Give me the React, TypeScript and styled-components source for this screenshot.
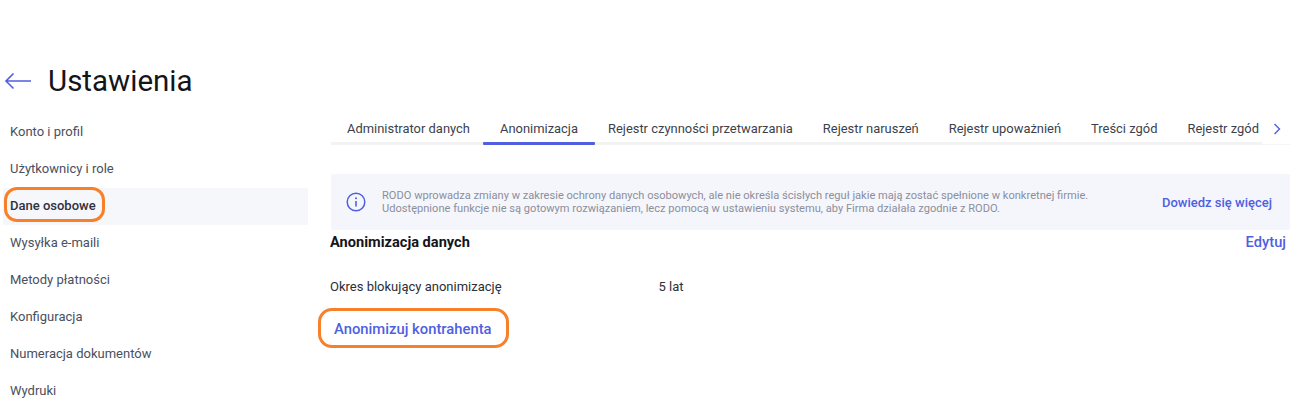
import styled, { createGlobalStyle } from "styled-components";

const menu = [
  "Konto i profil",
  "Użytkownicy i role",
  "Dane osobowe",
  "Wysyłka e-maili",
  "Metody płatności",
  "Konfiguracja",
  "Numeracja dokumentów",
  "Wydruki",
];

const tabs = [
  "Administrator danych",
  "Anonimizacja",
  "Rejestr czynności przetwarzania",
  "Rejestr naruszeń",
  "Rejestr upoważnień",
  "Treści zgód",
  "Rejestr zgód",
];

const GlobalStyle = createGlobalStyle`
  html, body {
    margin: 0;
    padding: 0;
    background: #fff;
    overflow: hidden;
  }
  body {
    font-family: Roboto, "Liberation Sans", sans-serif;
  }
`;

export default function App() {
  return (
    <S.Page>
      <GlobalStyle />
      <S.Header>
        <S.BackIcon width="28" height="18" viewBox="0 0 28 18" fill="none">
          <path d="M27 9H2M9.5 1.5L2 9l7.5 7.5" stroke="#4f5fe0" strokeWidth="1.6" />
        </S.BackIcon>
        <S.Title>Ustawienia</S.Title>
      </S.Header>

      <S.Body>
        <S.Sidebar>
          {menu.map((item) => (
            <S.MenuItem key={item} $active={item === "Dane osobowe"}>
              {item === "Dane osobowe" ? <S.MenuMark>{item}</S.MenuMark> : item}
            </S.MenuItem>
          ))}
        </S.Sidebar>

        <S.Content>
          <S.TabsBar>
            <S.Tabs>
              {tabs.map((tab) => (
                <S.Tab key={tab} $active={tab === "Anonimizacja"}>
                  {tab}
                </S.Tab>
              ))}
            </S.Tabs>
            <S.TabsNext>
              <svg width="8" height="12" viewBox="0 0 8 12" fill="none">
                <path d="M1.5 1l5 5-5 5" stroke="#4f5fe0" strokeWidth="1.4" />
              </svg>
            </S.TabsNext>
          </S.TabsBar>

          <S.Notice>
            <S.InfoIcon width="20" height="20" viewBox="0 0 20 20" fill="none">
              <circle cx="10" cy="10" r="8.8" stroke="#4f5fe0" strokeWidth="1.5" />
              <path d="M10 9v5.4" stroke="#4f5fe0" strokeWidth="1.6" />
              <circle cx="10" cy="6.2" r="1" fill="#4f5fe0" />
            </S.InfoIcon>
            <S.NoticeText>
              RODO wprowadza zmiany w zakresie ochrony danych osobowych, ale nie określa ścisłych reguł jakie mają
              zostać spełnione w konkretnej firmie.
              <br />
              Udostępnione funkcje nie są gotowym rozwiązaniem, lecz pomocą w ustawieniu systemu, aby Firma działała
              zgodnie z RODO.
            </S.NoticeText>
            <S.NoticeLink>Dowiedz się więcej</S.NoticeLink>
          </S.Notice>

          <S.SectionHead>
            <S.SectionTitle>Anonimizacja danych</S.SectionTitle>
            <S.EditLink>Edytuj</S.EditLink>
          </S.SectionHead>

          <S.Row>
            <S.RowLabel>Okres blokujący anonimizację</S.RowLabel>
            <S.RowValue>5 lat</S.RowValue>
          </S.Row>

          <S.ActionLink>Anonimizuj kontrahenta</S.ActionLink>
        </S.Content>
      </S.Body>
    </S.Page>
  );
}

const S = {
  Page: styled.div`
    width: 1309px;
    height: 409px;
    overflow: hidden;
    padding-top: 62px;
    box-sizing: border-box;
  `,

  Header: styled.header`
    display: flex;
    align-items: center;
    height: 37px;
    padding-left: 4px;
  `,

  BackIcon: styled.svg`
    display: block;
    margin-right: 16px;
  `,

  Title: styled.h1`
    margin: 0;
    font-size: 29.5px;
    font-weight: 400;
    color: #14151a;
  `,

  Body: styled.div`
    display: flex;
    margin-top: 15px;
  `,

  Sidebar: styled.nav`
    width: 305px;
    margin-left: 3px;
    margin-right: 22px;
    flex: none;
  `,

  MenuItem: styled.div<{ $active?: boolean }>`
    height: 37px;
    line-height: 36px;
    padding-left: 7px;
    font-size: 13px;
    color: ${(p) => (p.$active ? "#2f3040" : "#4a4f5e")};
    font-weight: ${(p) => (p.$active ? 500 : 400)};
    background: ${(p) => (p.$active ? "#f6f7fa" : "transparent")};
  `,

  MenuMark: styled.span`
    position: relative;
    display: inline-block;
    &::after {
      content: "";
      position: absolute;
      left: -6px;
      right: -9px;
      top: -1px;
      height: 35px;
      box-sizing: border-box;
      border: 3px solid #f7812b;
      border-radius: 13px;
    }
  `,

  Content: styled.main`
    width: 960px;
    flex: none;
  `,

  TabsBar: styled.div`
    position: relative;
    display: flex;
    height: 33px;
    width: 931px;
    margin-left: 1px;
    border-bottom: 3px solid #f3f3f4;
    box-sizing: content-box;
    margin-top: -5px;
  `,

  Tabs: styled.div`
    display: flex;
    flex: none;
    box-sizing: border-box;
    padding-left: 1px;
    width: 929px;
    height: 36px;
    overflow: hidden;
  `,

  Tab: styled.div<{ $active?: boolean }>`
    position: relative;
    flex: none;
    box-sizing: border-box;
    padding: 3px 15px 0;
    line-height: 34px;
    font-size: 12.93px;
    color: #3c3f4c;
    white-space: nowrap;
    &::after {
      content: "";
      display: ${(p) => (p.$active ? "block" : "none")};
      position: absolute;
      left: -2px;
      right: -2px;
      bottom: 0;
      height: 3px;
      border-radius: 1px;
      background: #4f5fe0;
    }
  `,

  TabsNext: styled.div`
    position: absolute;
    right: -29px;
    top: 0;
    width: 29px;
    height: 36px;
    padding-top: 5px;
    display: flex;
    align-items: center;
    justify-content: center;
    box-sizing: border-box;
    background: #fff;
    border-bottom: 1px solid #f6f6f7;
  `,

  Notice: styled.div`
    display: flex;
    align-items: center;
    height: 56px;
    margin-top: 29px;
    margin-left: 1px;
    padding: 0 18px 0 15px;
    background: #f5f6fc;
    border-radius: 2px;
  `,

  InfoIcon: styled.svg`
    display: block;
    flex: none;
    margin-right: 16px;
  `,

  NoticeText: styled.div`
    flex: 1;
    font-size: 11.1px;
    line-height: 13.5px;
    color: #8b8e9b;
  `,

  NoticeLink: styled.a`
    flex: none;
    font-size: 13px;
    font-weight: 500;
    color: #4f5fe0;
  `,

  SectionHead: styled.div`
    display: flex;
    align-items: center;
    justify-content: space-between;
    padding-right: 4px;
    height: 24px;
  `,

  SectionTitle: styled.h2`
    margin: 0;
    font-size: 14.6px;
    font-weight: 700;
    color: #14151a;
  `,

  EditLink: styled.a`
    font-size: 14.7px;
    font-weight: 500;
    color: #4f5fe0;
  `,

  Row: styled.div`
    display: flex;
    margin-top: 23px;
    line-height: 20px;
    font-size: 13px;
    color: #2c2e38;
  `,

  RowLabel: styled.div`
    width: 328.5px;
  `,

  RowValue: styled.div``,

  ActionLink: styled.a`
    position: relative;
    display: inline-block;
    margin: 22px 0 0 4px;
    font-size: 14.8px;
    line-height: 20px;
    font-weight: 500;
    color: #4f5fe0;
    &::after {
      content: "";
      position: absolute;
      left: -16px;
      right: -17px;
      top: -11px;
      bottom: -9px;
      box-sizing: border-box;
      border: 3px solid #f7812b;
      border-radius: 14px;
    }
  `,
};
